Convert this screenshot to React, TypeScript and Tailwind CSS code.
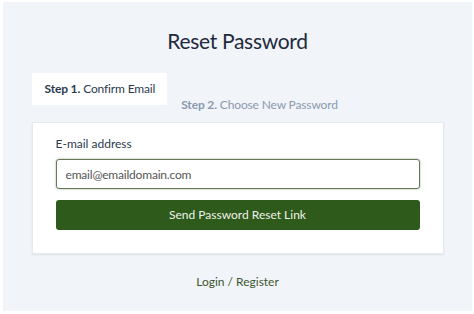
import React from 'react';

const font = { fontFamily: 'Lato, "Open Sans", sans-serif' };

export default function App() {
  return (
    <div className="w-[474px] h-[314px] bg-white pt-[2px] pl-[3px] pr-[2px] pb-[3px]" style={font}>
      <div className="h-full bg-[#f1f4f8] flex flex-col items-center">
        {/* Title */}
        <h1 className="mt-[26px] text-[21px] leading-[26px] tracking-[-0.3px] text-[#1f2a3c]">Reset Password</h1>

        <div className="mt-[19px] w-[412px]">
          {/* Steps */}
          <div className="flex items-start h-[49px] tracking-[-0.15px]">
            <div className="h-[32px] pl-[13px] pr-[12px] flex items-center bg-white text-[12px] text-[#2c3a4e]">
              <span className="font-bold mr-[3px]">Step 1.</span>
              Confirm Email
            </div>
            <div className="mt-[16px] h-[32px] pl-[14px] pr-[13px] flex items-center text-[12px] text-[#8a9ab0]">
              <span className="font-bold mr-[3px]">Step 2.</span>
              Choose New Password
            </div>
          </div>

          {/* Card */}
          <div className="bg-white h-[132px] px-[23px] pt-[13px] shadow-[0_1px_2px_rgba(0,0,0,0.08)] border border-[#e6eaef]">
            <label className="block text-[12px] leading-[16px] text-[#2c3a4e]">E-mail address</label>
            <input
              className="mt-[7px] w-full h-[30px] px-[9px] rounded-[3px] border border-[#66775a] shadow-[0_0_2px_rgba(60,100,40,0.6)] text-[12px] tracking-[-0.2px] text-[#444] placeholder:text-[#555] outline-none"
              placeholder="email@emaildomain.com"
              style={font}
            />
            <button
              className="mt-[11px] w-full h-[30px] rounded-[3px] bg-[#2e5a1c] text-[12px] text-[#eef2e8]"
              style={font}
            >
              Send Password Reset Link
            </button>
          </div>
        </div>

        <a className="mt-[19px] text-[12px] text-[#3c5630]">Login / Register</a>
      </div>
    </div>
  );
}
